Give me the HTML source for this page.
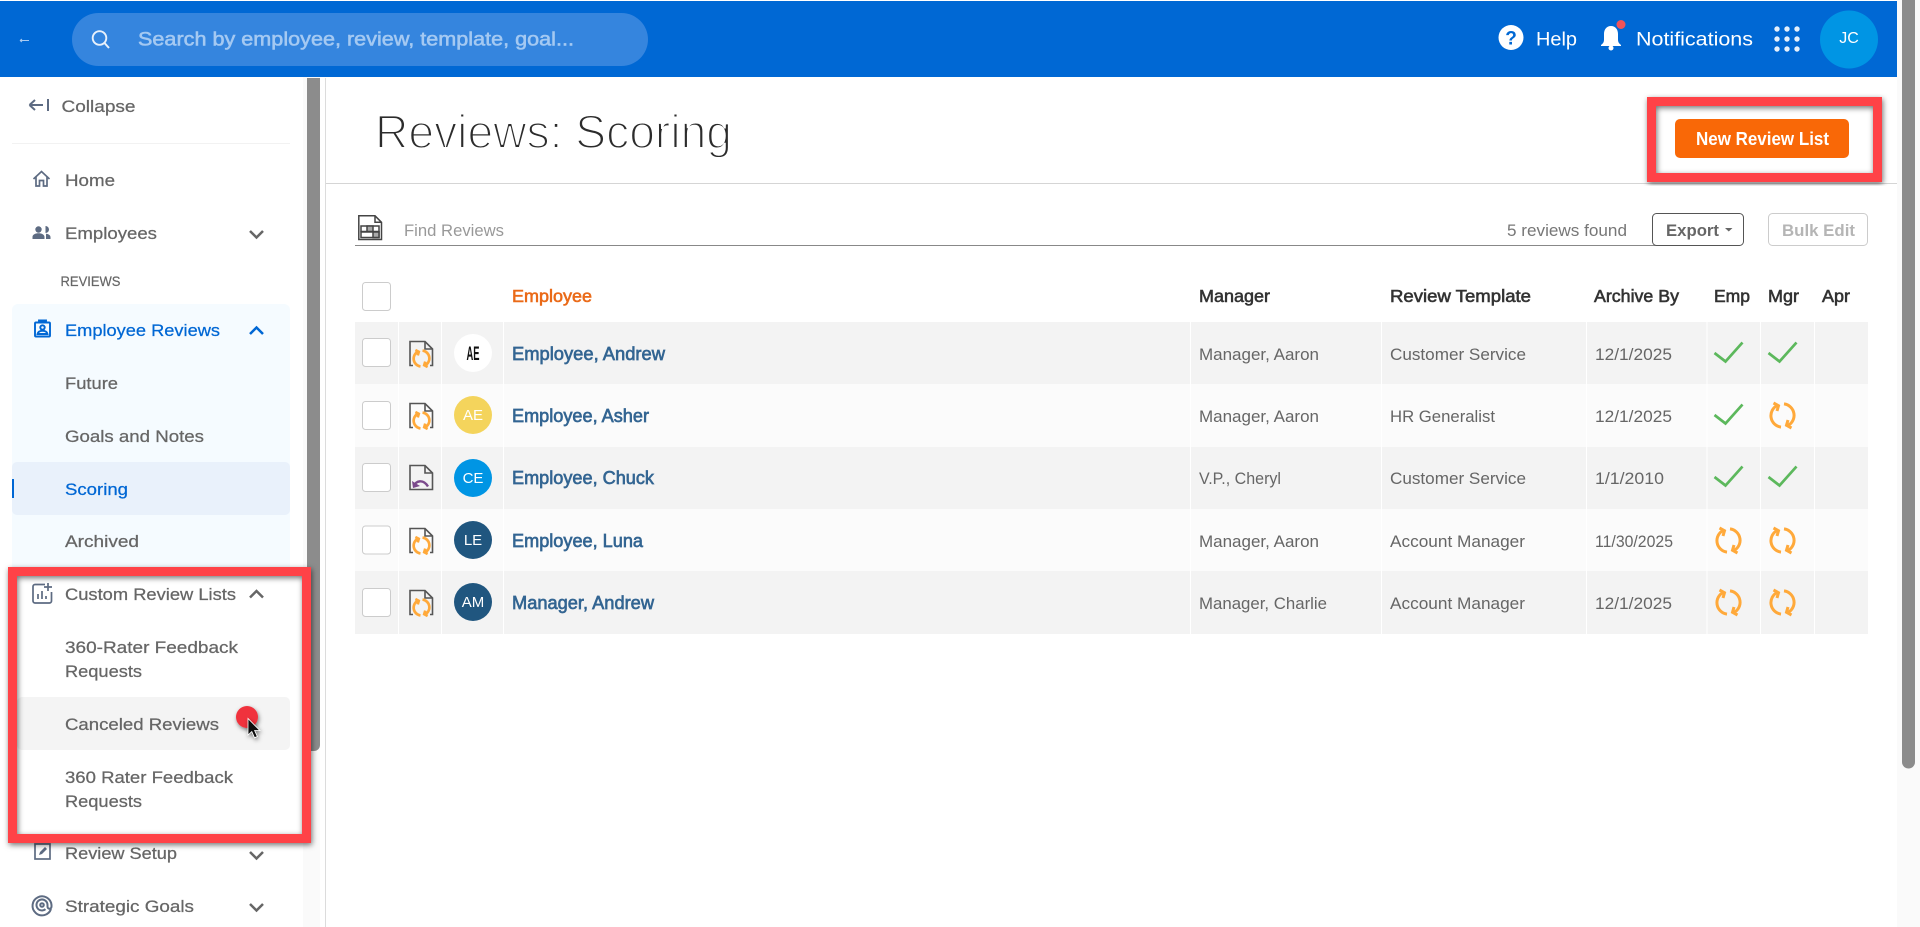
<!DOCTYPE html>
<html lang="en"><head><meta charset="utf-8"><title>Reviews: Scoring</title>
<style>
html,body{margin:0;padding:0;background:#fff;overflow:hidden}
svg{display:block;position:absolute;left:0;top:0}
text{font-family:"Liberation Sans",sans-serif;white-space:pre}
.n{font-size:17px;fill:#666;stroke:#666;stroke-width:.25}
.nb{font-size:17px;fill:#0067d4;stroke:#0067d4;stroke-width:.25}
.c{font-size:17px;fill:#666}
.h{font-size:17.5px;fill:#333;font-weight:400;stroke:#333;stroke-width:.6}
.nm{font-size:18px;fill:#336592;stroke:#336592;stroke-width:.65}
.av{font-size:15px;fill:#fff;text-anchor:middle}
.ic{fill:none;stroke:#5d6b82;stroke-width:1.7}
.ch{fill:none;stroke:#666;stroke-width:2.5}
</style></head><body>
<svg width="1920" height="927" viewBox="0 0 1920 927" xmlns="http://www.w3.org/2000/svg">
<defs>
<filter id="sh" x="-10%" y="-10%" width="120%" height="120%"><feDropShadow dx="1" dy="2" stdDeviation="3" flood-color="#000" flood-opacity=".55"/></filter>
<filter id="sh2" x="-50%" y="-50%" width="200%" height="200%"><feDropShadow dx="1" dy="2" stdDeviation="2" flood-color="#000" flood-opacity=".5"/></filter>
<g id="sync" fill="none" stroke="#ffa93a" stroke-width="3">
<path d="M-1.5 11.6A11.5 11.5 0 0 1 -5 -10.2"/><path d="M1.5 -11.6A11.5 11.5 0 0 1 5 10.2"/>
<path d="M-9 -12.5L-4 -9.8L-5.5 -4.5"/><path d="M9 12.5L4 9.8L5.5 4.5"/>
</g>
<g id="sync2" fill="none" stroke="#ffa93a" stroke-width="3.9">
<path d="M-1.5 11.6A11.5 11.5 0 0 1 -5 -10.2"/><path d="M1.5 -11.6A11.5 11.5 0 0 1 5 10.2"/>
<path d="M-9 -12.5L-4 -9.8L-5.5 -4.5"/><path d="M9 12.5L4 9.8L5.5 4.5"/>
</g>
<g id="doc" fill="none" stroke="#555" stroke-width="1.6">
<path d="M413 365.500H410V341.500H425L432.500 349V365.500H430"/><path d="M425 341.500V349H432.500"/>
</g>
<path id="chk" d="M1714.500 353L1725.500 361.500L1742.500 342.500" fill="none" stroke="#5cb85c" stroke-width="2.700"/>
</defs>

<!-- page scrollbar -->
<rect x="1897" y="0" width="23" height="927" fill="#fafafa"/>
<path d="M1902 0H1915V762a6.500 6.500 0 0 1-13 0Z" fill="#8c8c8c"/>

<!-- top bar -->
<rect x="0" y="1" width="1897" height="76" fill="#0068d4"/>
<path d="M20 40.500H29M20 40.500l2-1.500M20 40.500l2 1.500" stroke="#a9cbf2" stroke-width="1" fill="none"/>
<rect x="72" y="13" width="576" height="53" rx="26.500" fill="#3585de"/>
<circle cx="99.500" cy="38" r="6.800" fill="none" stroke="#e8f1fb" stroke-width="1.900"/><path d="M104.500 43l4.500 5" stroke="#e8f1fb" stroke-width="2"/>
<text x="138" y="45.500" textLength="436" lengthAdjust="spacingAndGlyphs" style="font-size:19.500px;fill:#a4c9f2;stroke:#a4c9f2;stroke-width:.55">Search by employee, review, template, goal...</text>
<circle cx="1511" cy="37.500" r="12.500" fill="#fff"/>
<text x="1511" y="44.500" text-anchor="middle" style="font-size:19px;font-weight:700;fill:#0068d4">?</text>
<text x="1536" y="45.500" textLength="41" lengthAdjust="spacingAndGlyphs" style="font-size:19px;fill:#fff">Help</text>
<path d="M1611 26c-4.500 0-7 3.500-7 8v6c0 2-1 3.500-3 5v1h20v-1c-2-1.500-3-3-3-5v-6c0-4.500-2.500-8-7-8z" fill="#fff"/><circle cx="1611" cy="48" r="2.500" fill="#fff"/>
<circle cx="1621" cy="24.500" r="5.500" fill="#0068d4"/><circle cx="1621" cy="24.500" r="4.500" fill="#f0535a"/>
<text x="1636" y="45.500" textLength="117" lengthAdjust="spacingAndGlyphs" style="font-size:19px;fill:#fff">Notifications</text>
<g fill="#e6f0fb"><circle cx="1777" cy="29" r="2.700"/><circle cx="1787" cy="29" r="2.700"/><circle cx="1797" cy="29" r="2.700"/><circle cx="1777" cy="39" r="2.700"/><circle cx="1787" cy="39" r="2.700"/><circle cx="1797" cy="39" r="2.700"/><circle cx="1777" cy="49" r="2.700"/><circle cx="1787" cy="49" r="2.700"/><circle cx="1797" cy="49" r="2.700"/></g>
<circle cx="1849" cy="39.500" r="29" fill="#0095e4"/>
<text x="1849" y="43" text-anchor="middle" style="font-size:16px;fill:#fff">JC</text>

<!-- sidebar structure -->
<rect x="303" y="77" width="17" height="850" fill="#fafafa"/>
<path d="M307 78H320V745a6 6 0 0 1-6 6H307Z" fill="#8c8c8c"/>
<rect x="325" y="78" width="1" height="849" fill="#dcdcdc"/>
<path d="M29.500 105H43M29.500 105l5.500-5M29.500 105l5.500 5M48 99V111" fill="none" stroke="#5d6b82" stroke-width="2"/>
<text class="n" x="61.500" y="112" textLength="74" lengthAdjust="spacingAndGlyphs">Collapse</text>
<rect x="12" y="143" width="278" height="1" fill="#f2f2f2"/>
<path class="ic" d="M33.500 179L41.500 171.500L49.500 179M36 177V186H39.500V180.500H43.500V186H47V177"/>
<text class="n" x="65" y="186" textLength="50" lengthAdjust="spacingAndGlyphs">Home</text>
<g fill="#5d6b82"><circle cx="38.500" cy="229.500" r="3.200"/><path d="M32.500 239v-2c0-2.500 2.800-3.800 6-3.800s6 1.300 6 3.800v2zM45.500 226a3.500 3.500 0 0 1 0 7zM46 233.800c2.800.3 4.500 1.500 4.500 3.500V239H46z"/></g>
<text class="n" x="65" y="239" textLength="92" lengthAdjust="spacingAndGlyphs">Employees</text>
<path class="ch" d="M250 231l6.500 6.500l6.500-6.500"/>
<text x="60.500" y="286" textLength="60" lengthAdjust="spacingAndGlyphs" style="font-size:14px;fill:#666;stroke:#666;stroke-width:.2">REVIEWS</text>

<rect x="12" y="304" width="278" height="270" rx="6" fill="#f5fbff"/>
<g fill="none" stroke="#0067d4" stroke-width="1.900"><rect x="35" y="322.500" width="15" height="14" rx="1"/><path d="M39 322.500v-2h7v2"/><circle cx="42.500" cy="327.500" r="2.200"/><path d="M37.500 334c.5-2.500 2.500-3.200 5-3.200s4.500.7 5 3.200z"/></g>
<text class="nb" x="65" y="336" textLength="155" lengthAdjust="spacingAndGlyphs">Employee Reviews</text>
<path fill="none" stroke="#0067d4" stroke-width="2.500" d="M250 334l6.500-6.500l6.500 6.500"/>
<text class="n" x="65" y="389" textLength="53" lengthAdjust="spacingAndGlyphs">Future</text>
<text class="n" x="65" y="442" textLength="139" lengthAdjust="spacingAndGlyphs">Goals and Notes</text>
<rect x="12" y="462" width="278" height="53" rx="5" fill="#e9f1fb"/>
<rect x="12" y="479" width="2" height="19" fill="#0067d4"/>
<text class="nb" x="65" y="495" textLength="63" lengthAdjust="spacingAndGlyphs">Scoring</text>
<text class="n" x="65" y="547" textLength="74" lengthAdjust="spacingAndGlyphs">Archived</text>

<rect x="17" y="576" width="285" height="258" fill="#fff"/>
<g class="ic"><path d="M45 584.500H35a2 2 0 0 0-2 2V601a2 2 0 0 0 2 2H49.500a2 2 0 0 0 2-2V592"/><path d="M38 599v-5M42 599v-8M46 599v-3M48 583v8M44 587h8"/></g>
<text class="n" x="65" y="600" textLength="171" lengthAdjust="spacingAndGlyphs">Custom Review Lists</text>
<path class="ch" d="M250 597.500l6.500-6.500l6.500 6.500"/>
<text class="n" x="65" y="653" textLength="173" lengthAdjust="spacingAndGlyphs">360-Rater Feedback</text>
<text class="n" x="65" y="677" textLength="77" lengthAdjust="spacingAndGlyphs">Requests</text>
<rect x="17" y="697" width="273" height="53" rx="5" fill="#f4f4f4"/>
<text class="n" x="65" y="730" textLength="154" lengthAdjust="spacingAndGlyphs">Canceled Reviews</text>
<text class="n" x="65" y="783" textLength="168" lengthAdjust="spacingAndGlyphs">360 Rater Feedback</text>
<text class="n" x="65" y="807" textLength="77" lengthAdjust="spacingAndGlyphs">Requests</text>

<g class="ic"><rect x="35" y="844" width="15" height="15"/><path d="M39 855l1-3l5-5l2 2l-5 5z" fill="#5d6b82" stroke="none"/></g>
<text class="n" x="65" y="859" textLength="112" lengthAdjust="spacingAndGlyphs">Review Setup</text>
<path class="ch" d="M250 852l6.500 6.500l6.500-6.500"/>
<g fill="none" stroke="#5d6b82" stroke-width="2"><path d="M51 909a9.500 9.500 0 1 1 .5-4v1.500c0 3-4 3-4 0V905a5.500 5.500 0 1 0-2 4.200"/><circle cx="42" cy="905" r="1.800"/></g>
<text class="n" x="65" y="912" textLength="129" lengthAdjust="spacingAndGlyphs">Strategic Goals</text>
<path class="ch" d="M250 904l6.500 6.500l6.500-6.500"/>

<!-- page header -->
<text x="375" y="148" textLength="357" lengthAdjust="spacingAndGlyphs" style="font-size:47px;fill:#2c2c2c;stroke:#fff;stroke-width:1.900">Reviews: Scoring</text>
<rect x="326" y="183" width="1571" height="1" fill="#d5d5d5"/>
<rect x="1675" y="119" width="174" height="39" rx="5" fill="#f96807"/>
<text x="1696" y="145" textLength="133" lengthAdjust="spacingAndGlyphs" style="font-size:18px;font-weight:700;fill:#fff">New Review List</text>

<!-- filter row -->
<g fill="none" stroke="#444" stroke-width="1.500"><path d="M358.800 239.500V215.800H375L381.500 222.300V239.500Z"/><path d="M375 215.800V222.300H381.500"/><rect x="361" y="226" width="18" height="5.500"/><rect x="361" y="232" width="18" height="5.500"/><rect x="367" y="226" width="6" height="5.500" fill="#aaa"/><rect x="373" y="232" width="6" height="5.500" fill="#aaa"/></g>
<text x="404" y="236" textLength="100" lengthAdjust="spacingAndGlyphs" style="font-size:17px;fill:#999">Find Reviews</text>
<rect x="355" y="245" width="1361" height="1" fill="#888"/>
<text x="1507" y="236" textLength="120" lengthAdjust="spacingAndGlyphs" style="font-size:17px;fill:#777">5 reviews found</text>
<rect x="1652.500" y="213.500" width="91" height="32" rx="4" fill="#fff" stroke="#555"/>
<text x="1666" y="236" textLength="53" lengthAdjust="spacingAndGlyphs" style="font-size:17px;font-weight:700;fill:#666">Export</text>
<path d="M1725 228h7.500l-3.750 3.500z" fill="#666"/>
<rect x="1768.500" y="213.500" width="99" height="32" rx="4" fill="#fff" stroke="#ccc"/>
<text x="1782" y="236" textLength="73" lengthAdjust="spacingAndGlyphs" style="font-size:17px;font-weight:700;fill:#b5b5b5">Bulk Edit</text>

<!-- table header -->
<rect x="362.500" y="282.500" width="28" height="28" rx="3" fill="#fff" stroke="#ccc"/>
<text x="512" y="302" textLength="80" lengthAdjust="spacingAndGlyphs" style="font-size:17.500px;fill:#ea6a18;stroke:#ea6a18;stroke-width:.6">Employee</text>
<text class="h" x="1199" y="302" textLength="71" lengthAdjust="spacingAndGlyphs">Manager</text>
<text class="h" x="1390" y="302" textLength="141" lengthAdjust="spacingAndGlyphs">Review Template</text>
<text class="h" x="1594" y="302" textLength="85" lengthAdjust="spacingAndGlyphs">Archive By</text>
<text class="h" x="1714" y="302" textLength="36" lengthAdjust="spacingAndGlyphs">Emp</text>
<text class="h" x="1768" y="302" textLength="31" lengthAdjust="spacingAndGlyphs">Mgr</text>
<text class="h" x="1822" y="302" textLength="28" lengthAdjust="spacingAndGlyphs">Apr</text>

<!-- rows -->
<rect x="355" y="322" width="1513" height="62" fill="#f3f3f3"/>
<rect x="355" y="384" width="1513" height="63" fill="#fbfbfb"/>
<rect x="355" y="447" width="1513" height="62" fill="#f3f3f3"/>
<rect x="355" y="509" width="1513" height="62" fill="#fbfbfb"/>
<rect x="355" y="571" width="1513" height="63" fill="#f3f3f3"/>
<g fill="#fff"><rect x="398" y="322" width="1" height="312"/><rect x="441" y="322" width="1" height="312"/><rect x="503" y="322" width="1" height="312"/><rect x="1190" y="322" width="1" height="312"/><rect x="1381" y="322" width="1" height="312"/><rect x="1586" y="322" width="1" height="312"/><rect x="1706.500" y="322" width="1" height="312"/><rect x="1760" y="322" width="1" height="312"/><rect x="1814" y="322" width="1" height="312"/></g>
<g fill="#fff" stroke="#ccc"><rect x="362.500" y="338.500" width="28" height="28" rx="3"/><rect x="362.500" y="401.500" width="28" height="28" rx="3"/><rect x="362.500" y="463.500" width="28" height="28" rx="3"/><rect x="362.500" y="526" width="28" height="28" rx="3"/><rect x="362.500" y="588.500" width="28" height="28" rx="3"/></g>

<use href="#doc"/><use href="#sync2" transform="translate(421.500 358.500) scale(.68)"/>
<use href="#doc" y="62"/><use href="#sync2" transform="translate(421.500 420.500) scale(.68)"/>
<g fill="none" stroke="#555" stroke-width="1.600"><path d="M410 465.500V489.500H432.500V473L425 465.500Z"/><path d="M425 465.500V473H432.500"/></g>
<path d="M414 486c1.500-5 9-7.500 14 .5" fill="none" stroke="#7b4a8c" stroke-width="2.400"/><path d="M412 481l1 7l7-2z" fill="#7b4a8c"/>
<use href="#doc" y="187"/><use href="#sync2" transform="translate(421.500 545.500) scale(.68)"/>
<use href="#doc" y="249"/><use href="#sync2" transform="translate(421.500 607.500) scale(.68)"/>

<circle cx="473" cy="353" r="19" fill="#fff"/><text x="473" y="360" text-anchor="middle" textLength="13" lengthAdjust="spacingAndGlyphs" style="font-size:19px;font-weight:700;fill:#111">AE</text>
<circle cx="473" cy="415" r="19" fill="#f4d45c"/><text class="av" x="473" y="420">AE</text>
<circle cx="473" cy="478" r="19" fill="#0095e4"/><text class="av" x="473" y="483">CE</text>
<circle cx="473" cy="540" r="19" fill="#20567f"/><text class="av" x="473" y="545">LE</text>
<circle cx="473" cy="602" r="19" fill="#20567f"/><text class="av" x="473" y="607">AM</text>

<text class="nm" x="512" y="360" textLength="153" lengthAdjust="spacingAndGlyphs">Employee, Andrew</text>
<text class="nm" x="512" y="422" textLength="137" lengthAdjust="spacingAndGlyphs">Employee, Asher</text>
<text class="nm" x="512" y="484" textLength="142" lengthAdjust="spacingAndGlyphs">Employee, Chuck</text>
<text class="nm" x="512" y="547" textLength="131" lengthAdjust="spacingAndGlyphs">Employee, Luna</text>
<text class="nm" x="512" y="609" textLength="142" lengthAdjust="spacingAndGlyphs">Manager, Andrew</text>

<text class="c" x="1199" y="360" textLength="120" lengthAdjust="spacingAndGlyphs">Manager, Aaron</text>
<text class="c" x="1199" y="422" textLength="120" lengthAdjust="spacingAndGlyphs">Manager, Aaron</text>
<text class="c" x="1199" y="484" textLength="82" lengthAdjust="spacingAndGlyphs">V.P., Cheryl</text>
<text class="c" x="1199" y="547" textLength="120" lengthAdjust="spacingAndGlyphs">Manager, Aaron</text>
<text class="c" x="1199" y="609" textLength="128" lengthAdjust="spacingAndGlyphs">Manager, Charlie</text>

<text class="c" x="1390" y="360" textLength="136" lengthAdjust="spacingAndGlyphs">Customer Service</text>
<text class="c" x="1390" y="422" textLength="105" lengthAdjust="spacingAndGlyphs">HR Generalist</text>
<text class="c" x="1390" y="484" textLength="136" lengthAdjust="spacingAndGlyphs">Customer Service</text>
<text class="c" x="1390" y="547" textLength="135" lengthAdjust="spacingAndGlyphs">Account Manager</text>
<text class="c" x="1390" y="609" textLength="135" lengthAdjust="spacingAndGlyphs">Account Manager</text>

<text class="c" x="1595" y="360" textLength="77" lengthAdjust="spacingAndGlyphs">12/1/2025</text>
<text class="c" x="1595" y="422" textLength="77" lengthAdjust="spacingAndGlyphs">12/1/2025</text>
<text class="c" x="1595" y="484" textLength="69" lengthAdjust="spacingAndGlyphs">1/1/2010</text>
<text class="c" x="1595" y="547" textLength="78" lengthAdjust="spacingAndGlyphs">11/30/2025</text>
<text class="c" x="1595" y="609" textLength="77" lengthAdjust="spacingAndGlyphs">12/1/2025</text>

<use href="#chk"/><use href="#chk" x="54"/>
<use href="#chk" y="62"/><use href="#sync" transform="translate(1782.500 415.500)"/>
<use href="#chk" y="124"/><use href="#chk" x="54" y="124"/>
<use href="#sync" transform="translate(1728.500 540.500)"/><use href="#sync" transform="translate(1782.500 540.500)"/>
<use href="#sync" transform="translate(1728.500 602.500)"/><use href="#sync" transform="translate(1782.500 602.500)"/>

<!-- annotations -->
<rect x="1651.500" y="101.500" width="226" height="76" fill="none" stroke="#ff4347" stroke-width="9" filter="url(#sh)"/>
<rect x="12.500" y="571.500" width="294" height="267" fill="none" stroke="#ff4347" stroke-width="9" filter="url(#sh)"/>
<circle cx="247" cy="717" r="11" fill="#f0323c" filter="url(#sh2)"/>
<path d="M248 718.500V735l3.800-3.500l2.700 6.200l2.800-1.200l-2.700-6h5.200z" fill="#111" stroke="#fff" stroke-width=".8" filter="url(#sh2)"/>
</svg>
</body></html>
